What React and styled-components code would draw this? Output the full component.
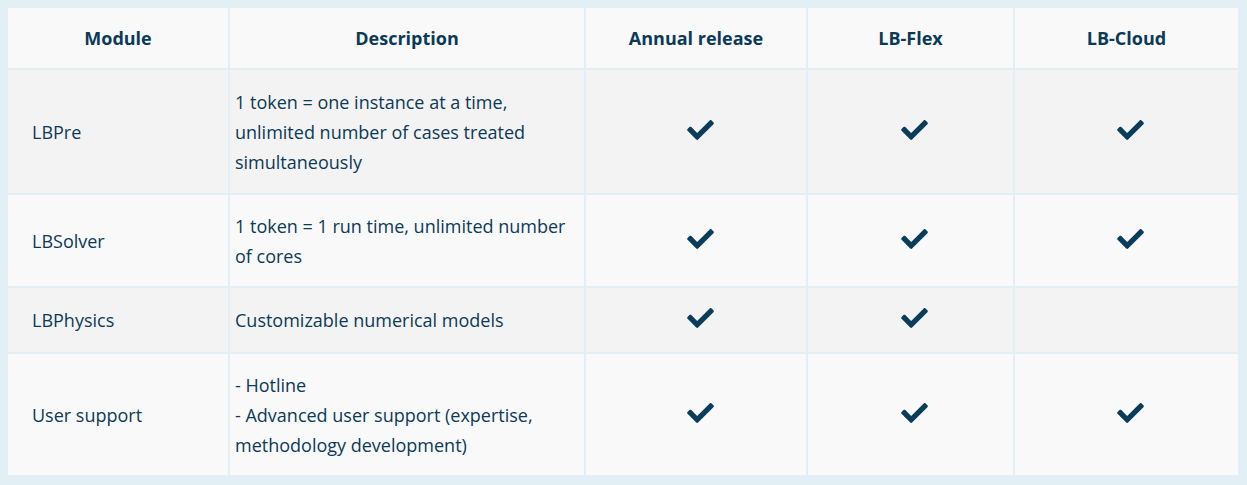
import React from "react";
import styled, { createGlobalStyle } from "styled-components";

const GlobalStyle = createGlobalStyle`
  body {
    margin: 8px;
    background: #e2eff4;
    font-family: "Open Sans", "Noto Sans", sans-serif;
    color: #0c3a58;
  }
`;

const rows = [
  {
    module: "LBPre",
    desc: ["1 token = one instance at a time,", "unlimited number of cases treated", "simultaneously"],
    checks: [true, true, true],
  },
  {
    module: "LBSolver",
    desc: ["1 token = 1 run time, unlimited number", "of cores"],
    checks: [true, true, true],
  },
  {
    module: "LBPhysics",
    desc: ["Customizable numerical models"],
    checks: [true, true, false],
  },
  {
    module: "User support",
    desc: ["- Hotline", "- Advanced user support (expertise,", "methodology development)"],
    checks: [true, true, true],
  },
];

const Check = () => (
  <svg width="27" height="20" viewBox="0 65 512 384" fill="#0a3d5c">
    <path d="M173.898 439.404l-166.4-166.4c-9.997-9.997-9.997-26.206 0-36.204l36.203-36.204c9.997-9.998 26.207-9.998 36.204 0L192 312.69 432.095 72.596c9.997-9.997 26.207-9.997 36.204 0l36.203 36.204c9.997 9.997 9.997 26.206 0 36.204l-294.4 294.401c-9.998 9.997-26.207 9.997-36.204-.001z" />
  </svg>
);

function App() {
  return (
    <>
      <GlobalStyle />
      <Table>
        <Head>Module</Head>
        <Head>Description</Head>
        <Head>Annual release</Head>
        <Head>LB-Flex</Head>
        <Head>LB-Cloud</Head>
        {rows.map((r, i) => (
          <React.Fragment key={r.module}>
            <NameCell $odd={i % 2 === 0}>{r.module}</NameCell>
            <DescCell $odd={i % 2 === 0}>
              {r.desc.map((line) => (
                <div key={line}>{line}</div>
              ))}
            </DescCell>
            {r.checks.map((c, j) => (
              <CheckCell key={j} $odd={i % 2 === 0}>
                {c && <Check />}
              </CheckCell>
            ))}
          </React.Fragment>
        ))}
      </Table>
    </>
  );
}

const Table = styled.div`
  display: grid;
  grid-template-columns: 220px 354px 220px 205px 223px;
  grid-template-rows: 60px 123px 91px 64px 121px;
  gap: 2px;
  background: #e2eff4;
  font-size: 18px;
  line-height: 30px;
`;

const Cell = styled.div`
  background: ${(p) => (p.$odd ? "#f3f3f3" : "#f9f9f9")};
  display: flex;
  flex-direction: column;
  justify-content: center;
`;

const Head = styled(Cell)`
  background: #f9f9f9;
  align-items: center;
  font-weight: 700;
  color: #0b3a57;
`;

const NameCell = styled(Cell)`
  padding-left: 24px;
`;

const DescCell = styled(Cell)`
  padding-left: 5px;
`;

const CheckCell = styled(Cell)`
  align-items: center;
  svg {
    margin-top: -4px;
    margin-left: 8px;
  }
`;

export default App;
